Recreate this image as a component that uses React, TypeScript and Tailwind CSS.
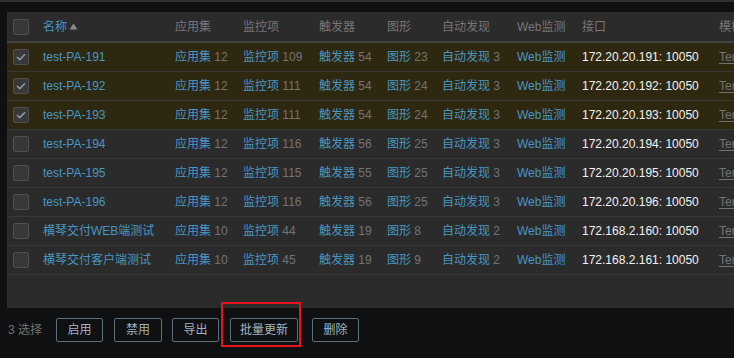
import React from "react";

type Row = {
  name: string;
  app: number;
  items: number;
  triggers: number;
  graphs: number;
  disc: number;
  ip: string;
  sel: boolean;
};

const rows: Row[] = [
  { name: "test-PA-191", app: 12, items: 109, triggers: 54, graphs: 23, disc: 3, ip: "172.20.20.191: 10050", sel: true },
  { name: "test-PA-192", app: 12, items: 111, triggers: 54, graphs: 24, disc: 3, ip: "172.20.20.192: 10050", sel: true },
  { name: "test-PA-193", app: 12, items: 111, triggers: 54, graphs: 24, disc: 3, ip: "172.20.20.193: 10050", sel: true },
  { name: "test-PA-194", app: 12, items: 116, triggers: 56, graphs: 25, disc: 3, ip: "172.20.20.194: 10050", sel: false },
  { name: "test-PA-195", app: 12, items: 115, triggers: 55, graphs: 25, disc: 3, ip: "172.20.20.195: 10050", sel: false },
  { name: "test-PA-196", app: 12, items: 116, triggers: 56, graphs: 25, disc: 3, ip: "172.20.20.196: 10050", sel: false },
  { name: "横琴交付WEB端测试", app: 10, items: 44, triggers: 19, graphs: 8, disc: 2, ip: "172.168.2.160: 10050", sel: false },
  { name: "横琴交付客户端测试", app: 10, items: 45, triggers: 19, graphs: 9, disc: 2, ip: "172.168.2.161: 10050", sel: false },
];

const grid =
  "grid grid-cols-[36px_132px_68px_76px_68px_55px_75px_65px_137px_1fr] items-center";

function Checkbox({ checked }: { checked: boolean }) {
  return (
    <div className="ml-[6px] w-4 h-4 rounded-[2px] border border-[#4f4f4f] bg-[#383838] flex items-center justify-center">
      {checked && (
        <svg width="10" height="8" viewBox="0 0 10 8">
          <path d="M1 4 L3.8 6.6 L9 1.2" fill="none" stroke="#8c9ba6" strokeWidth="1.6" />
        </svg>
      )}
    </div>
  );
}

function LinkCount({ label, n }: { label: string; n: number }) {
  return (
    <span className="whitespace-nowrap">
      <span className="text-[#4796c4]">{label}</span>
      <span className="text-[#737373]"> {n}</span>
    </span>
  );
}

export default function App() {
  return (
    <div
      className="relative w-[734px] h-[358px] overflow-hidden bg-[#0e1012] text-[12px] leading-[14px]"
      style={{ fontFamily: '"Liberation Sans", Arial, "Noto Sans CJK SC", sans-serif' }}
    >
      <div className="h-[2px] bg-[#2f2f2f]" />
      <div className="h-[10px]" />
      <div className="ml-[7px] h-[296px] bg-[#2b2b2b]">
        <div className={`${grid} h-[31px] border-b-2 border-[#454545] text-[#767676]`}>
          <Checkbox checked={false} />
          <div className="text-[#4796c4] flex items-center">
            名称
            <svg className="ml-[2px]" width="9" height="7" viewBox="0 0 9 7">
              <path d="M4.5 0.5 L8.5 6.5 L0.5 6.5 Z" fill="#8a8a8a" />
            </svg>
          </div>
          <div>应用集</div>
          <div>监控项</div>
          <div>触发器</div>
          <div>图形</div>
          <div>自动发现</div>
          <div>Web监测</div>
          <div>接口</div>
          <div className="whitespace-nowrap">模板</div>
        </div>
        {rows.map((r) => (
          <div
            key={r.name}
            className={`${grid} h-[29px] border-b border-[#383838] ${r.sel ? "bg-[#2e2811]" : ""}`}
          >
            <Checkbox checked={r.sel} />
            <div className="text-[#4796c4] whitespace-nowrap">{r.name}</div>
            <LinkCount label="应用集" n={r.app} />
            <LinkCount label="监控项" n={r.items} />
            <LinkCount label="触发器" n={r.triggers} />
            <LinkCount label="图形" n={r.graphs} />
            <LinkCount label="自动发现" n={r.disc} />
            <div className="text-[#4796c4] whitespace-nowrap">Web监测</div>
            <div className="text-[#f2f2f2] whitespace-nowrap">{r.ip}</div>
            <div className="whitespace-nowrap overflow-hidden text-[#737373] underline decoration-[#737373] underline-offset-2">
              Template OS Linux
            </div>
          </div>
        ))}
      </div>
      <div className="flex items-center pt-[10px] pl-[8px] text-[#737373]">
        <span className="mr-[14px] whitespace-nowrap">3 选择</span>
        {[
          { t: "启用", w: "w-[47px]", mr: "mr-[11px]" },
          { t: "禁用", w: "w-[48px]", mr: "mr-[10px]" },
          { t: "导出", w: "w-[47px]", mr: "mr-[11px]" },
          { t: "批量更新", w: "w-[68px]", mr: "mr-[14px]" },
          { t: "删除", w: "w-[47px]", mr: "" },
        ].map((b) => (
          <div
            key={b.t}
            className={`${b.w} ${b.mr} h-[24px] rounded-[2px] border border-[#5d6f7a] text-[#a3b4c0] flex items-center justify-center text-[12px]`}
          >
            {b.t}
          </div>
        ))}
      </div>
      <div className="absolute left-[221px] top-[302px] w-[80px] h-[45px] border-2 border-[#e8141c]" />
    </div>
  );
}
